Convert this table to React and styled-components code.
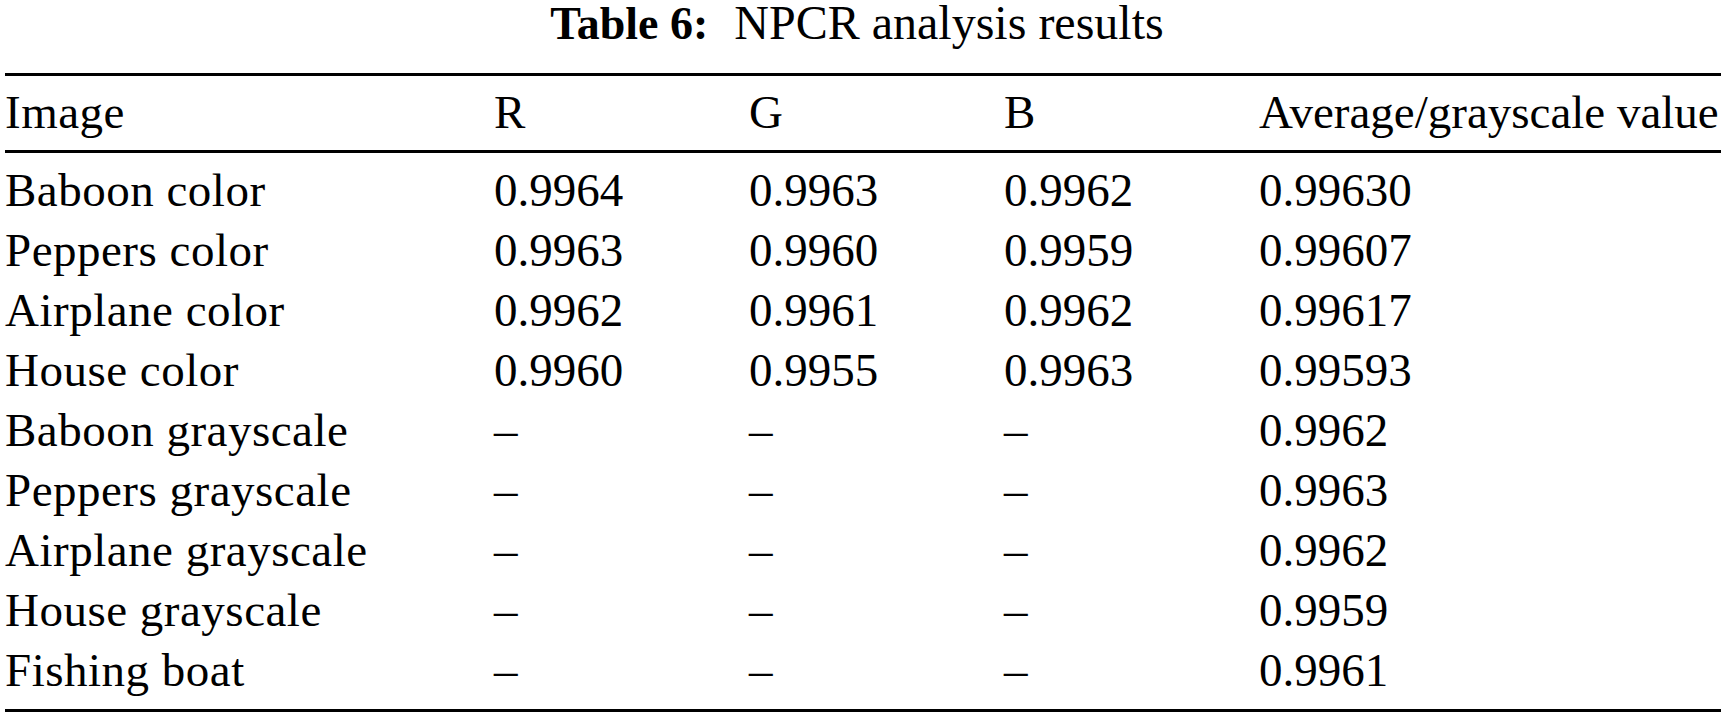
import React from "react";
import styled, { createGlobalStyle } from "styled-components";

const GlobalStyle = createGlobalStyle`
  html, body {
    margin: 0;
    padding: 0;
    background: #ffffff;
  }
  body {
    font-family: "Liberation Serif", "Times New Roman", serif;
    color: #000000;
  }
`;

const Page = styled.div`
  padding-left: 5px;
  width: 1716px;
`;

const Caption = styled.div`
  font-size: 48px;
  line-height: 46px;
  height: 46px;
  text-align: center;
  padding-right: 12px;
  margin-bottom: 27px;
  white-space: nowrap;
`;

const CaptionLabel = styled.span`
  font-weight: bold;
  font-size: 46px;
  margin-right: 26px;
`;

const Table = styled.div`
  border-top: 3px solid #000;
  border-bottom: 3px solid #000;
  font-size: 47px;
`;

const Head = styled.div`
  padding: 6px 0 8px;
  border-bottom: 3px solid #000;
`;

const Body = styled.div`
  padding: 7px 0 9px;
`;

const Row = styled.div`
  display: grid;
  grid-template-columns: 489px 255px 255px 255px 1fr;
  line-height: 60px;
  height: 60px;
  white-space: nowrap;
`;

const Cell = styled.div`
  text-align: left;
  letter-spacing: ${(p) => (p.$label ? "0.5px" : "0")};
`;

const headers = ["Image", "R", "G", "B", "Average/grayscale value"];

const rows = [
  ["Baboon color", "0.9964", "0.9963", "0.9962", "0.99630"],
  ["Peppers color", "0.9963", "0.9960", "0.9959", "0.99607"],
  ["Airplane color", "0.9962", "0.9961", "0.9962", "0.99617"],
  ["House color", "0.9960", "0.9955", "0.9963", "0.99593"],
  ["Baboon grayscale", "–", "–", "–", "0.9962"],
  ["Peppers grayscale", "–", "–", "–", "0.9963"],
  ["Airplane grayscale", "–", "–", "–", "0.9962"],
  ["House grayscale", "–", "–", "–", "0.9959"],
  ["Fishing boat", "–", "–", "–", "0.9961"],
];

export default function App() {
  return (
    <>
      <GlobalStyle />
      <Page>
        <Caption>
          <CaptionLabel>Table 6:</CaptionLabel>NPCR analysis results
        </Caption>
        <Table>
          <Head>
            <Row>
              {headers.map((h, i) => (
                <Cell key={h} $label={i === 0}>
                  {h}
                </Cell>
              ))}
            </Row>
          </Head>
          <Body>
            {rows.map((r) => (
              <Row key={r[0]}>
                {r.map((c, i) => (
                  <Cell key={i} $label={i === 0}>
                    {c}
                  </Cell>
                ))}
              </Row>
            ))}
          </Body>
        </Table>
      </Page>
    </>
  );
}
